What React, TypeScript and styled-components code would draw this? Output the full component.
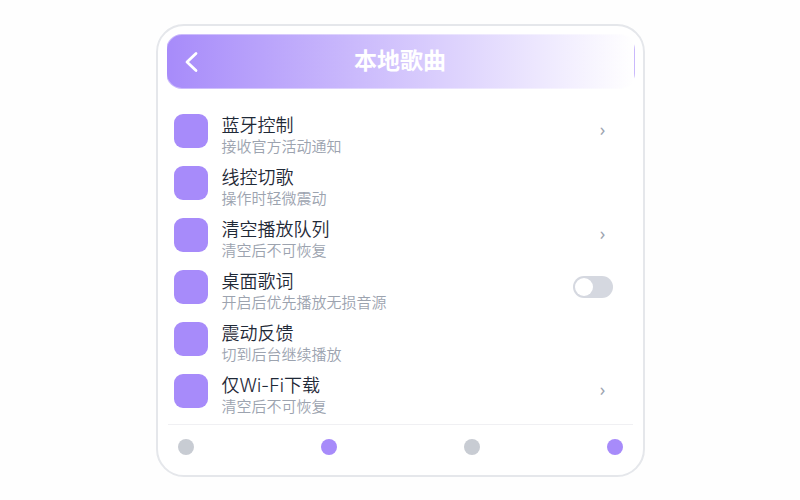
import { useState } from "react";
import styled, { createGlobalStyle } from "styled-components";

const GlobalStyle = createGlobalStyle`
  * {
    box-sizing: border-box;
  }

  body {
    margin: 0;
    background: #fefefe;
    font-family: "Noto Sans", "Noto Sans CJK SC", sans-serif;
  }
`;

const Page = styled.main`
  display: flex;
  justify-content: center;
  padding: 24px 16px;
`;

const Card = styled.section`
  width: 100%;
  max-width: 489px;
  padding: 8px 8px 20px;
  border: 2px solid #e5e7eb;
  border-radius: 28px;
  background: #ffffff;
`;

const Header = styled.header`
  display: grid;
  grid-template-columns: 48px 1fr 48px;
  align-items: center;
  height: 55px;
  border: 1px solid rgba(255, 255, 255, 0.4);
  border-radius: 16px;
  background: linear-gradient(90deg, #a78bfa, #ffffff);
`;

const BackButton = styled.button`
  display: flex;
  align-items: center;
  justify-content: center;
  height: 48px;
  padding: 0;
  border: 0;
  background: none;
  color: #ffffff;
  cursor: pointer;
`;

const Title = styled.h1`
  margin: 0;
  padding-bottom: 4px;
  color: #ffffff;
  font-size: 23px;
  font-weight: 700;
  line-height: 32px;
  text-align: center;
`;

const List = styled.ul`
  display: flex;
  flex-direction: column;
  gap: 8px;
  margin: 0;
  padding: 25px 22px 6px 8px;
  list-style: none;
`;

const Row = styled.li`
  display: flex;
  align-items: flex-start;
  gap: 14px;
  height: 44px;
`;

const Thumb = styled.span`
  flex: none;
  width: 34px;
  height: 34px;
  border-radius: 9px;
  background: #a78bfa;
`;

const Texts = styled.div`
  flex: 1;
  min-width: 0;
`;

const Label = styled.div`
  color: #1f2937;
  font-family: Inter, "Noto Sans CJK SC", sans-serif;
  font-size: 18px;
  font-weight: 350;
  line-height: 24px;
`;

const Hint = styled.div`
  color: #9ca3af;
  font-size: 15px;
  font-weight: 350;
  line-height: 16px;
`;

const Action = styled.div`
  display: flex;
  align-items: center;
  height: 34px;
`;

const Arrow = styled.button`
  width: 20px;
  height: 24px;
  padding: 0 0 4px;
  border: 0;
  background: none;
  color: #9ca3af;
  font-family: inherit;
  font-size: 18px;
  line-height: 20px;
  cursor: pointer;
`;

const Switch = styled.input`
  appearance: none;
  display: flex;
  align-items: center;
  width: 40px;
  height: 22px;
  margin: 0;
  padding: 2px;
  border-radius: 11px;
  background: #d5d8e0;
  cursor: pointer;

  &::before {
    content: "";
    width: 18px;
    height: 18px;
    border-radius: 50%;
    background: #ffffff;
  }

  &:checked {
    justify-content: flex-end;
    background: #a78bfa;
  }
`;

const TabBar = styled.nav`
  display: flex;
  justify-content: space-between;
  margin: 0 2px;
  padding: 14px 10px 0;
  border-top: 1px solid #f0f0f3;
`;

const Tab = styled.button<{ $active: boolean }>`
  width: 16px;
  height: 16px;
  padding: 0;
  border: 0;
  border-radius: 50%;
  background: ${({ $active }) => ($active ? "#a78bfa" : "#c8ccd3")};
  cursor: pointer;
`;

type Item = {
  label: string;
  hint: string;
  action?: "arrow" | "switch";
};

const items: Item[] = [
  { label: "蓝牙控制", hint: "接收官方活动通知", action: "arrow" },
  { label: "线控切歌", hint: "操作时轻微震动" },
  { label: "清空播放队列", hint: "清空后不可恢复", action: "arrow" },
  { label: "桌面歌词", hint: "开启后优先播放无损音源", action: "switch" },
  { label: "震动反馈", hint: "切到后台继续播放" },
  { label: "仅Wi-Fi下载", hint: "清空后不可恢复", action: "arrow" },
];

const tabs = [false, true, false, true];

export default function App() {
  const [lyrics, setLyrics] = useState(false);

  return (
    <Page lang="zh-CN">
      <GlobalStyle />
      <Card>
        <Header>
          <BackButton aria-label="返回">
            <svg width="14" height="22" viewBox="0 0 14 22" fill="none">
              <path
                d="M12 2.5 3 11l9 8.5"
                stroke="currentColor"
                strokeWidth="2.8"
                strokeLinecap="round"
                strokeLinejoin="round"
              />
            </svg>
          </BackButton>
          <Title>本地歌曲</Title>
        </Header>
        <List>
          {items.map(({ label, hint, action }) => (
            <Row key={label}>
              <Thumb />
              <Texts>
                <Label>{label}</Label>
                <Hint>{hint}</Hint>
              </Texts>
              <Action>
                {action === "arrow" && <Arrow aria-label={label}>›</Arrow>}
                {action === "switch" && (
                  <Switch
                    type="checkbox"
                    role="switch"
                    aria-label={label}
                    checked={lyrics}
                    onChange={(e) => setLyrics(e.target.checked)}
                  />
                )}
              </Action>
            </Row>
          ))}
        </List>
        <TabBar>
          {tabs.map((active, i) => (
            <Tab key={i} $active={active} aria-label={`标签 ${i + 1}`} />
          ))}
        </TabBar>
      </Card>
    </Page>
  );
}
